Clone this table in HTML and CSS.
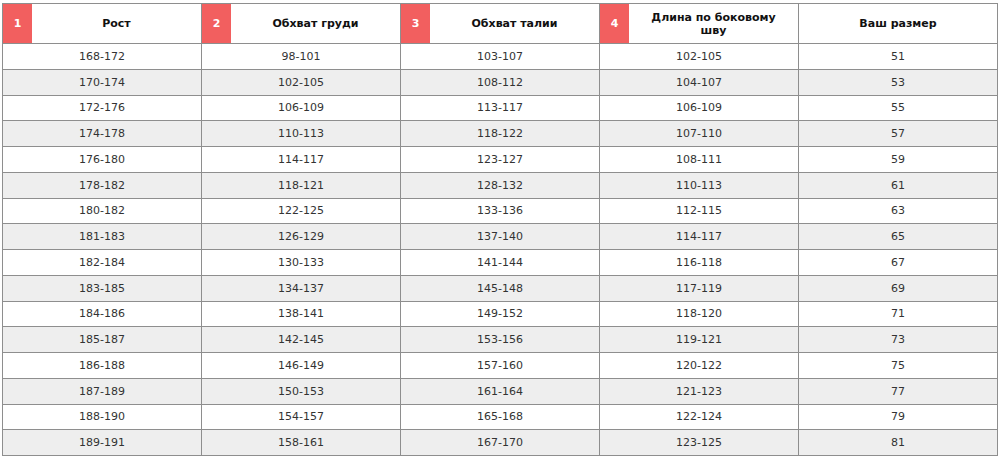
FILE: index.html
```html
<!DOCTYPE html>
<html lang="ru">
<head>
<meta charset="utf-8">
<title>Таблица размеров</title>
<link rel="stylesheet" href="styles.css">
</head>
<body>
<table class="sizes">
  <thead>
    <tr>
      <th><div class="head"><span class="num">1</span><span class="label">Рост</span></div></th>
      <th><div class="head"><span class="num">2</span><span class="label">Обхват груди</span></div></th>
      <th><div class="head"><span class="num">3</span><span class="label">Обхват талии</span></div></th>
      <th><div class="head"><span class="num">4</span><span class="label">Длина по боковому шву</span></div></th>
      <th><div class="head"><span class="label">Ваш размер</span></div></th>
    </tr>
  </thead>
  <tbody>
    <tr><td>168-172</td><td>98-101</td><td>103-107</td><td>102-105</td><td>51</td></tr>
    <tr><td>170-174</td><td>102-105</td><td>108-112</td><td>104-107</td><td>53</td></tr>
    <tr><td>172-176</td><td>106-109</td><td>113-117</td><td>106-109</td><td>55</td></tr>
    <tr><td>174-178</td><td>110-113</td><td>118-122</td><td>107-110</td><td>57</td></tr>
    <tr><td>176-180</td><td>114-117</td><td>123-127</td><td>108-111</td><td>59</td></tr>
    <tr><td>178-182</td><td>118-121</td><td>128-132</td><td>110-113</td><td>61</td></tr>
    <tr><td>180-182</td><td>122-125</td><td>133-136</td><td>112-115</td><td>63</td></tr>
    <tr><td>181-183</td><td>126-129</td><td>137-140</td><td>114-117</td><td>65</td></tr>
    <tr><td>182-184</td><td>130-133</td><td>141-144</td><td>116-118</td><td>67</td></tr>
    <tr><td>183-185</td><td>134-137</td><td>145-148</td><td>117-119</td><td>69</td></tr>
    <tr><td>184-186</td><td>138-141</td><td>149-152</td><td>118-120</td><td>71</td></tr>
    <tr><td>185-187</td><td>142-145</td><td>153-156</td><td>119-121</td><td>73</td></tr>
    <tr><td>186-188</td><td>146-149</td><td>157-160</td><td>120-122</td><td>75</td></tr>
    <tr><td>187-189</td><td>150-153</td><td>161-164</td><td>121-123</td><td>77</td></tr>
    <tr><td>188-190</td><td>154-157</td><td>165-168</td><td>122-124</td><td>79</td></tr>
    <tr><td>189-191</td><td>158-161</td><td>167-170</td><td>123-125</td><td>81</td></tr>
  </tbody>
</table>
</body>
</html>
```
FILE: styles.css
```css
html, body {
  margin: 0;
  padding: 0;
  background: #ffffff;
}

body {
  padding: 3px 0 0 2px;
  font-family: "DejaVu Sans", Verdana, sans-serif;
}

.sizes {
  border-collapse: collapse;
  table-layout: fixed;
  width: 996px;
  border: 1px solid #555555;
}

.sizes th,
.sizes td {
  border: 1px solid #8e8e8e;
  padding: 0;
  text-align: center;
  vertical-align: middle;
}

.sizes th {
  height: 39px;
  background: #ffffff;
}

.head {
  display: flex;
  align-items: stretch;
  height: 39px;
}

.num {
  flex: 0 0 29px;
  background: #f25f5f;
  color: #ffffff;
  font-size: 11px;
  font-weight: bold;
  display: flex;
  align-items: center;
  justify-content: center;
}

.label {
  flex: 1;
  display: flex;
  align-items: center;
  justify-content: center;
  color: #111111;
  font-size: 11px;
  font-weight: bold;
  line-height: 13px;
  padding: 0 12px;
}

.sizes td {
  height: 24.75px;
  font-size: 11px;
  color: #333333;
}

.sizes tbody tr:nth-child(even) td {
  background: #eeeeee;
}
```
